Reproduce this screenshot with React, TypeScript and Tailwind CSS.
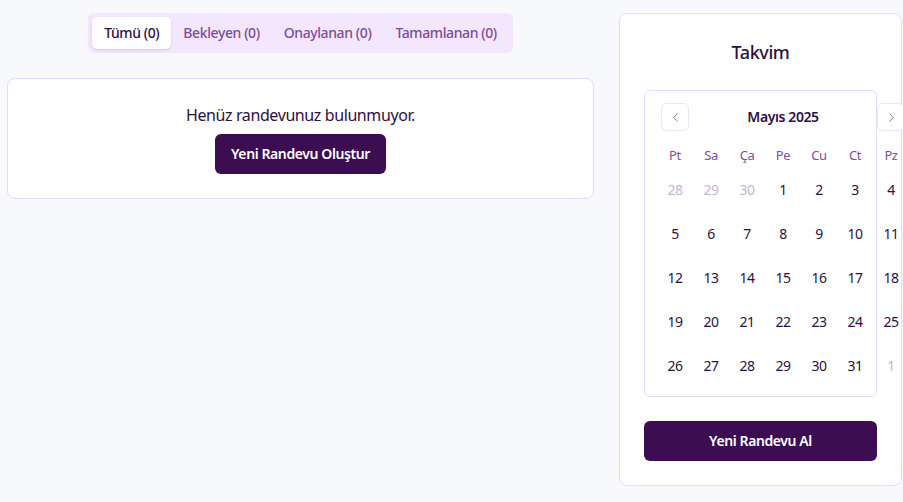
import { ChevronLeft, ChevronRight } from "lucide-react";

const weekdays = ["Pt", "Sa", "Ça", "Pe", "Cu", "Ct", "Pz"];

type Day = { n: number; outside?: boolean };

const weeks: Day[][] = [
  [{ n: 28, outside: true }, { n: 29, outside: true }, { n: 30, outside: true }, { n: 1 }, { n: 2 }, { n: 3 }, { n: 4 }],
  [{ n: 5 }, { n: 6 }, { n: 7 }, { n: 8 }, { n: 9 }, { n: 10 }, { n: 11 }],
  [{ n: 12 }, { n: 13 }, { n: 14 }, { n: 15 }, { n: 16 }, { n: 17 }, { n: 18 }],
  [{ n: 19 }, { n: 20 }, { n: 21 }, { n: 22 }, { n: 23 }, { n: 24 }, { n: 25 }],
  [{ n: 26 }, { n: 27 }, { n: 28 }, { n: 29 }, { n: 30 }, { n: 31 }, { n: 1, outside: true }],
];

const tabs = ["Tümü (0)", "Bekleyen (0)", "Onaylanan (0)", "Tamamlanan (0)"];

function Calendar() {
  return (
    <div className="rounded-md border border-[#ead8fb] bg-white p-3">
      <div className="relative w-[252px]">
        <div className="relative flex h-7 items-center justify-center">
          <button className="absolute left-1 flex h-7 w-7 items-center justify-center rounded-md border border-[#efe3fb] bg-white text-[#8a7d93]">
            <ChevronLeft size={15} strokeWidth={1.6} />
          </button>
          <span className="text-sm font-semibold text-[#2e1040]">Mayıs 2025</span>
          <button className="absolute right-1 flex h-7 w-7 items-center justify-center rounded-md border border-[#efe3fb] bg-white text-[#8a7d93]">
            <ChevronRight size={15} strokeWidth={1.6} />
          </button>
        </div>
        <div className="mt-4 flex h-[17px] items-center">
          {weekdays.map((d) => (
            <div key={d} className="w-9 text-center text-[13px] leading-none text-[#7b4f9e]">
              {d}
            </div>
          ))}
        </div>
        <div className="mt-2 flex flex-col gap-2">
          {weeks.map((w, i) => (
            <div key={i} className="flex">
              {w.map((d, j) => (
                <div
                  key={j}
                  className={
                    d.outside
                      ? "flex h-9 w-9 items-center justify-center text-sm text-[#c8b3d8]"
                      : "flex h-9 w-9 items-center justify-center text-sm text-[#2e1040]"
                  }
                >
                  {d.n}
                </div>
              ))}
            </div>
          ))}
        </div>
      </div>
    </div>
  );
}

export default function App() {
  return (
    <div className="min-h-screen bg-[#f8f9fc] font-['Noto_Sans',sans-serif] tracking-[-0.025em]">
      <div className="flex gap-[25px] pl-[7px] pt-[13px]">
        <div className="w-[587px]">
          <div className="flex justify-center">
            <div className="flex rounded-md bg-[#f3e6fd] p-1">
              {tabs.map((t, i) => (
                <div
                  key={t}
                  className={
                    i === 0
                      ? "rounded-[5px] bg-white px-3 py-[6px] text-sm font-medium text-[#2e1040] shadow-sm"
                      : "px-3 py-[6px] text-sm font-medium text-[#7d4d96]"
                  }
                >
                  {t}
                </div>
              ))}
            </div>
          </div>
          <div className="mt-[25px] flex flex-col items-center rounded-lg border border-[#ead8fb] bg-white p-6">
            <p className="text-base text-[#2e1040]">Henüz randevunuz bulunmuyor.</p>
            <button className="mt-[7px] h-10 rounded-md bg-[#3c0d50] px-4 text-sm font-semibold text-white">
              Yeni Randevu Oluştur
            </button>
          </div>
        </div>
        <div className="w-[283px] rounded-lg border border-[#ead8fb] bg-white px-6 pb-6 pt-6">
          <h2 className="text-center text-lg font-medium text-[#2e1040]">Takvim</h2>
          <div className="mt-6">
            <Calendar />
          </div>
          <button className="mt-6 h-10 w-full rounded-md bg-[#3c0d50] text-sm font-semibold text-white">
            Yeni Randevu Al
          </button>
        </div>
      </div>
    </div>
  );
}
